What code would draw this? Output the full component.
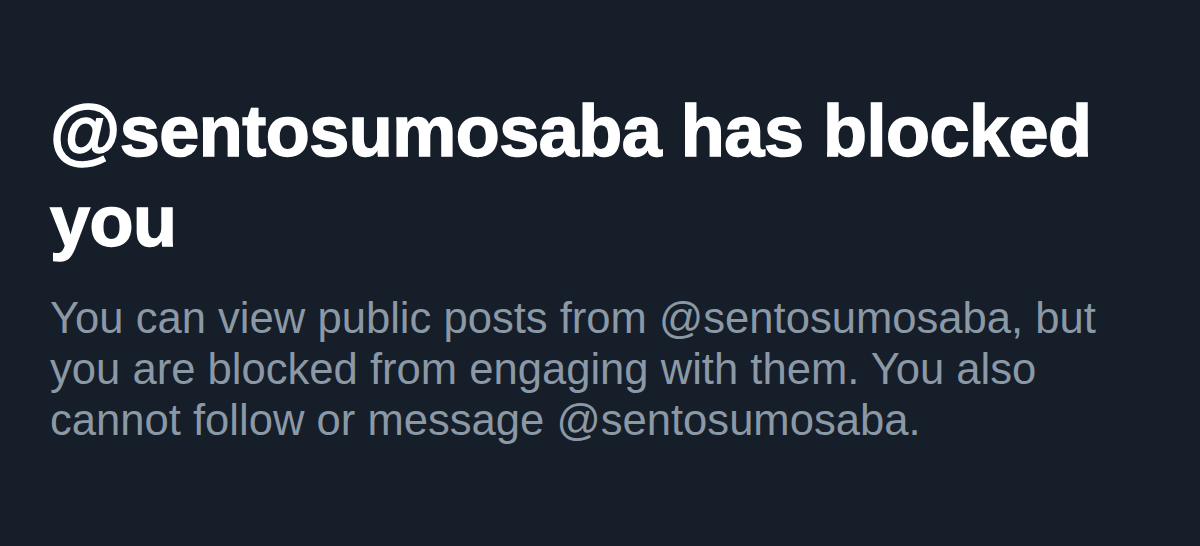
export default function App() {
  return (
    <div className="w-[1200px] h-[546px] bg-[#161e2a] overflow-hidden" style={{ fontFamily: '"Liberation Sans", Arial, sans-serif' }}>
      <div className="pl-[50px] pr-[40px] pt-[86px]">
        <h1 className="text-[72px] leading-[90px] font-bold text-white tracking-[-0.5px] [-webkit-text-stroke:1.5px_white]">
          @sentosumosaba has blocked you
        </h1>
        <p className="mt-[27px] text-[43.6px] leading-[51px] text-[#8b98a5] max-w-[1120px]">
          You can view public posts from @sentosumosaba, but you are blocked from engaging with them. You also cannot follow or message @sentosumosaba.
        </p>
      </div>
    </div>
  );
}
